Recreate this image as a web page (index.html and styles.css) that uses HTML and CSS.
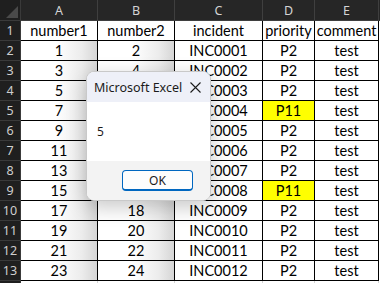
FILE: index.html
```html
<!DOCTYPE html>
<html>
<head>
<meta charset="utf-8">
<link rel="stylesheet" href="styles.css">
</head>
<body>
<div class="sheet">
  <div class="corner"><svg width="21" height="21" viewBox="0 0 21 21"><polygon points="18,6 18,18 6,18" fill="#4a4a4a"/></svg></div>
  <div class="ch">A</div><div class="ch">B</div><div class="ch">C</div><div class="ch">D</div><div class="ch">E</div><div class="ch ch-rest"></div>

  <div class="rh">1</div><div class="c">number1</div><div class="c">number2</div><div class="c">incident</div><div class="c">priority</div><div class="c">comment</div><div class="rest"></div>
  <div class="rh">2</div><div class="c g">1</div><div class="c g">2</div><div class="c">INC0001</div><div class="c">P2</div><div class="c">test</div><div class="rest"></div>
  <div class="rh">3</div><div class="c g">3</div><div class="c g">4</div><div class="c">INC0002</div><div class="c">P2</div><div class="c">test</div><div class="rest"></div>
  <div class="rh">4</div><div class="c g">5</div><div class="c g">6</div><div class="c">INC0003</div><div class="c">P2</div><div class="c">test</div><div class="rest"></div>
  <div class="rh">5</div><div class="c g">7</div><div class="c g">8</div><div class="c">INC0004</div><div class="c hl">P11</div><div class="c">test</div><div class="rest"></div>
  <div class="rh">6</div><div class="c g">9</div><div class="c g">10</div><div class="c">INC0005</div><div class="c">P2</div><div class="c">test</div><div class="rest"></div>
  <div class="rh">7</div><div class="c g">11</div><div class="c g">12</div><div class="c">INC0006</div><div class="c">P2</div><div class="c">test</div><div class="rest"></div>
  <div class="rh">8</div><div class="c g">13</div><div class="c g">14</div><div class="c">INC0007</div><div class="c">P2</div><div class="c">test</div><div class="rest"></div>
  <div class="rh">9</div><div class="c g">15</div><div class="c g">16</div><div class="c">INC0008</div><div class="c hl">P11</div><div class="c">test</div><div class="rest"></div>
  <div class="rh">10</div><div class="c g">17</div><div class="c g">18</div><div class="c">INC0009</div><div class="c">P2</div><div class="c">test</div><div class="rest"></div>
  <div class="rh">11</div><div class="c g">19</div><div class="c g">20</div><div class="c">INC0010</div><div class="c">P2</div><div class="c">test</div><div class="rest"></div>
  <div class="rh">12</div><div class="c g">21</div><div class="c g">22</div><div class="c">INC0011</div><div class="c">P2</div><div class="c">test</div><div class="rest"></div>
  <div class="rh">13</div><div class="c g">23</div><div class="c g">24</div><div class="c">INC0012</div><div class="c">P2</div><div class="c">test</div><div class="rest"></div>
  <div class="rh"></div><div class="e"></div><div class="e"></div><div class="e"></div><div class="e"></div><div class="e"></div><div class="rest"></div>
</div>

<div class="dialog">
  <div class="dlg-title">
    <span class="dlg-name">Microsoft Excel</span>
    <svg class="dlg-close" width="11" height="11" viewBox="0 0 11 11"><path d="M0.5 0.5 L10.5 10.5 M10.5 0.5 L0.5 10.5" stroke="#1b1b1b" stroke-width="1.1" fill="none"/></svg>
  </div>
  <div class="dlg-body">5</div>
  <div class="dlg-foot"><div class="btn">OK</div></div>
</div>
</body>
</html>
```
FILE: styles.css
```css
html, body {
  margin: 0;
  padding: 0;
  background: #ffffff;
  overflow: hidden;
}

.sheet {
  display: grid;
  grid-template-columns: 21px 77px 77px 88px 52px 64px 1fr;
  grid-template-rows: 21px repeat(13, 20px) 10px;
  width: 380px;
  font-family: Lato, "Liberation Sans", sans-serif;
}

.corner {
  background: #1f1f1f;
  border-right: 1px solid #3a3a3a;
  border-bottom: 1px solid #3a3a3a;
  box-sizing: border-box;
}
.corner svg { display: block; }

.ch {
  background: #262626;
  color: #d4d4d4;
  font-family: "Noto Sans", sans-serif;
  font-size: 12.5px;
  display: flex;
  align-items: center;
  justify-content: center;
  border-right: 1px solid #3f3f3f;
  border-bottom: 1px solid #3f3f3f;
  box-sizing: border-box;
}
.ch-rest { border-right: none; }

.rh {
  background: #1f1f1f;
  color: #cfcfcf;
  font-family: "Noto Sans", sans-serif;
  font-size: 12.5px;
  display: flex;
  align-items: center;
  justify-content: center;
  border-right: 1px solid #3a3a3a;
  border-bottom: 1px solid #3a3a3a;
  box-sizing: border-box;
}

.c {
  color: #000000;
  font-size: 14.5px;
  display: flex;
  align-items: center;
  justify-content: center;
  border-right: 1px solid #000000;
  border-bottom: 1px solid #000000;
  box-sizing: border-box;
  background: #ffffff;
  white-space: nowrap;
  overflow: hidden;
}

.g {
  background: linear-gradient(to right, #ffffff 45%, #ececec 80%, #d6d6d6 100%);
}

.hl { background: #ffff00; }

.e {
  border-right: 1px solid #d4d4d4;
  box-sizing: border-box;
}

.rest { background: #ffffff; }

.dialog {
  position: absolute;
  left: 86px;
  top: 71px;
  width: 125px;
  height: 130px;
  box-sizing: border-box;
  border: 1px solid #c9c9c9;
  border-radius: 8px;
  overflow: hidden;
  background: #ffffff;
  display: flex;
  flex-direction: column;
  box-shadow: 0 6px 20px rgba(0, 0, 0, 0.22);
  font-family: "Noto Sans", sans-serif;
  color: #1b1b1b;
}

.dlg-title {
  height: 30px;
  background: #eef0f8;
  display: flex;
  align-items: center;
  justify-content: space-between;
  padding: 0 9px 0 7px;
  flex: none;
}
.dlg-name { font-size: 12.5px; }
.dlg-close { display: block; }

.dlg-body {
  height: 59px;
  flex: none;
  display: flex;
  align-items: center;
  padding-left: 10px;
  font-size: 12px;
}

.dlg-foot {
  flex: 1;
  background: #f3f3f3;
  display: flex;
  justify-content: flex-end;
  align-items: flex-start;
  padding: 9px 17px 0 0;
}

.btn {
  width: 71px;
  height: 21px;
  box-sizing: border-box;
  border: 1px solid #0067c0;
  border-bottom-width: 2px;
  border-radius: 4px;
  background: #fdfdfd;
  display: flex;
  align-items: center;
  justify-content: center;
  font-size: 12px;
  color: #1b1b1b;
}
```
